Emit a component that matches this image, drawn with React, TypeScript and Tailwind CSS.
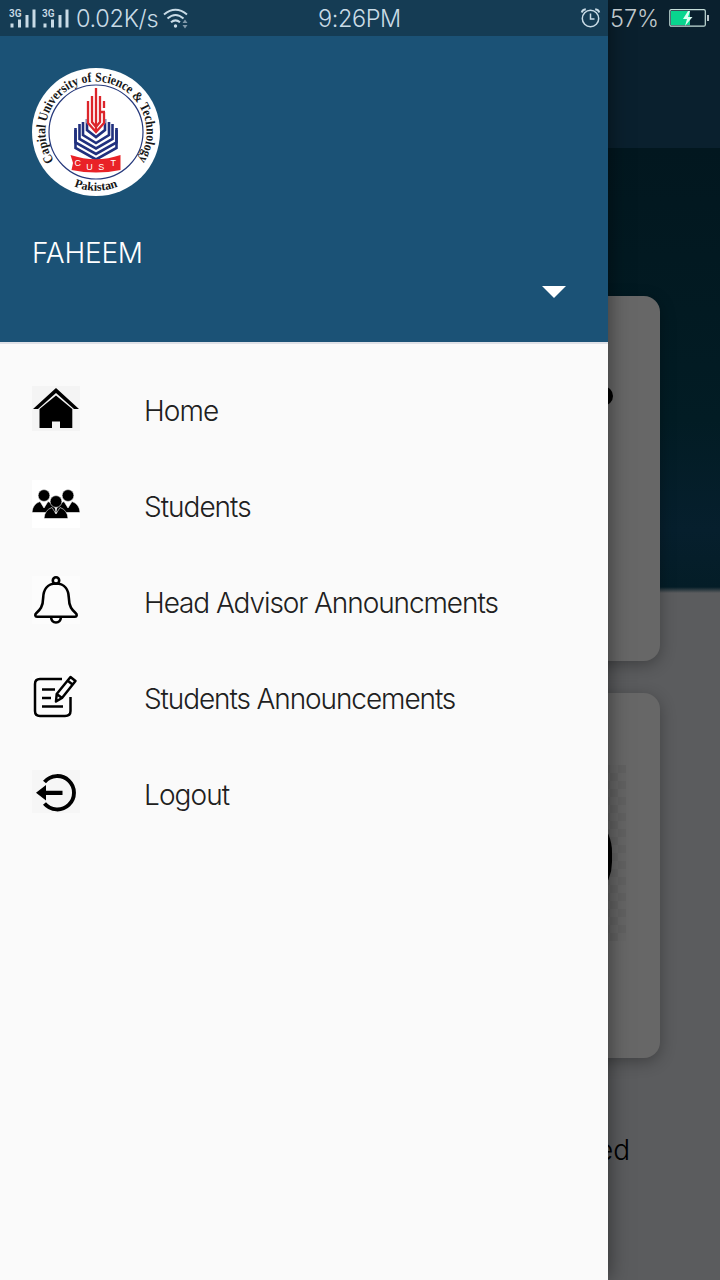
import type { ReactNode } from "react";

function Signal() {
  return (
    <svg width="29" height="24" viewBox="0 0 29 24" fill="#c9dbe6">
      <text x="0" y="11" fontSize="10" fontWeight="600" fontFamily="Roboto, sans-serif">3G</text>
      <rect x="1.5" y="17.500" width="3" height="4" />
      <rect x="9" y="13.500" width="3" height="8" />
      <rect x="16.5" y="9" width="3" height="12.500" />
      <rect x="23.5" y="3.500" width="3" height="18" />
    </svg>
  );
}

function StatusBar() {
  return (
    <header className="absolute inset-x-0 top-0 flex h-9 items-center text-[23.5px] font-light text-[#c9dbe6]">
      <div className="flex w-[318px] items-center pl-[9px]">
        <div className="flex w-[67px] gap-[4px]">
          <Signal />
          <Signal />
        </div>
        <span className="w-[86px] whitespace-nowrap pt-[2px] tracking-[-0.3px]">0.02K/s</span>
        <svg width="28" height="24" viewBox="0 0 28 24" fill="none" stroke="#c9dbe6" strokeWidth="2">
          <path d="M2 8.5Q13.5-1 25 8.5M5.5 12.5Q13.500 5.500 21.500 12.500M9 16.300Q13.500 12.500 18 16.300" />
          <circle cx="13.500" cy="20" r="1.700" fill="#c9dbe6" stroke="none" />
          <path d="m20.500 17 2.500-3.500 2.500 3.500zM20.500 19l2.500 3.500 2.500-3.500z" fill="#8299a9" stroke="none" />
        </svg>
      </div>
      <span className="w-[262px] pt-[2px] tracking-[-0.4px]">9:26PM</span>
      <svg className="shrink-0" width="22" height="22" viewBox="0 0 22 22" fill="none" stroke="#c9dbe6" strokeWidth="1.500">
        <circle cx="10.500" cy="11.500" r="8.200" />
        <path d="M10.500 6.500v5.500h4" />
        <path d="M1.800 5.500q.5-2.800 4-3.200M19.200 5.500q-.5-2.800-4-3.200" strokeWidth="2" />
      </svg>
      <span className="ml-[8px] w-[59px] pt-[2px] text-[#c0c8cc]">57%</span>
      <svg className="shrink-0" width="40" height="20" viewBox="0 0 40 20">
        <rect x=".8" y="1.600" width="35.500" height="16.600" rx="1.500" fill="none" stroke="#c5ded9" strokeWidth="1.200" />
        <rect x="2" y="3" width="19" height="14" fill="#08d58e" />
        <rect x="38" y="7" width="2" height="6" fill="#b9c4c8" />
        <path d="m19 3-5 8h4l-2 7 7.500-9h-4.500l2-6z" fill="#dcfff2" />
      </svg>
    </header>
  );
}

function Crest() {
  return (
    <svg className="size-32" viewBox="0 0 128 128">
      <defs>
        <path id="upper-arc" d="M22 92.500A50.600 50.600 0 1 1 106 92.500" />
        <path id="lower-arc" d="M25 108A59 59 0 0 0 103 108" />
      </defs>
      <circle cx="64" cy="64" r="64" fill="#fff" />
      <circle cx="64" cy="64" r="47" fill="none" stroke="#26397c" strokeWidth="1.200" />
      <g fontFamily="Liberation Serif, serif" fontWeight="700" fill="#171717">
        <text fontSize="13.500" textLength="218" lengthAdjust="spacingAndGlyphs">
          <textPath href="#upper-arc" textLength="218" lengthAdjust="spacingAndGlyphs">Capital University of Science &amp; Technology</textPath>
        </text>
        <text fontSize="12" textAnchor="middle">
          <textPath href="#lower-arc" startOffset="50%">Pakistan</textPath>
        </text>
      </g>
      <g fill="none" stroke="#20307e" strokeWidth="2.600">
        <path d="M43.500 60V80L64 91.500 84.500 80V60" />
        <path d="M43.500 62V74.500L64 86 84.500 74.500V62" />
        <path d="M47.500 56V71L64 80.500 80.500 71V56" />
        <path d="M51 54V67L64 75 77 67V54" />
        <path d="M55 51V62L64 69 73 62V51" />
      </g>
      <path d="M54.500 35 64 20l9.500 15v20L64 65l-9.500-10z" fill="#fff" />
      <g fill="none" stroke="#dc252b" strokeWidth="2.300">
        <path d="M64 20V64M60 28V54l4 5 4-5V28M56 33V55l8 9 8-9V44M72 33V40M68 44h5" />
      </g>
      <path d="M38.500 87Q64 95.500 88.500 87V102Q64 107 39.500 102L41 95z" fill="#e92227" />
      <text x="42.500 54.300 66.300 78.600" y="97.500 101.500 101.500 97.500" fill="#fff" fontFamily="Liberation Sans, sans-serif" fontSize="9">
        CUST
      </text>
    </svg>
  );
}

function HomeIcon() {
  return (
    <svg className="size-12" viewBox="0 0 48 48">
      <path fill="#f4f4f4" d="M0 2h48v45H0z" />
      <path d="M24 4 1 25h5L24 9l18 16h5z" />
      <path d="m24 11.500 16.300 13.500v19H28v-6.500h-8v6.500H7.500V25z" />
    </svg>
  );
}

function Person({ x, y }: { x: number; y: number }) {
  return (
    <g transform={`translate(${x} ${y})`} stroke="#fff" strokeWidth=".6">
      <path d="M-12 17Q-11.500 8.500-4 6L0 12.500 4 6Q11.500 8.500 12 17z" />
      <circle r="5.900" />
    </g>
  );
}

function StudentsIcon() {
  return (
    <svg className="size-12" viewBox="0 0 48 48">
      <path fill="#fff" d="M0 0h48v48H0z" />
      <Person x={12} y={15.500} />
      <Person x={36} y={15.500} />
      <Person x={24} y={21.500} />
    </svg>
  );
}

function BellIcon() {
  return (
    <svg className="size-12" viewBox="0 0 48 48" fill="none" stroke="#000" strokeWidth="2.600">
      <path fill="#fcfcfc" stroke="none" d="M0 0h48v48H0z" />
      <circle cx="24" cy="4.500" r="3.200" />
      <path d="M24 7.500C15 7.500 11.500 14 11.200 21.500 11 31 8 34 4.200 37.300 2.800 38.500 3 40.700 5 40.700H43C45 40.700 45.200 38.500 43.800 37.300 40 34 37 31 36.800 21.500 36.500 14 33 7.500 24 7.500Z" />
      <path d="M19 41Q19.500 46.500 24 46.500T29 41" />
    </svg>
  );
}

function NoteIcon() {
  return (
    <svg className="size-12" viewBox="0 0 48 48" fill="none" stroke="#000" strokeWidth="2.500">
      <path fill="#fcfcfc" stroke="none" d="M0 0h48v48H0z" />
      <path d="M30 7H8Q3 7 3 12V39Q3 44 8 44H33Q38.500 44 38.500 39V25M10 17.500H23M10 26H19M10 34.500H31" />
      <path d="m24 29.500.700-7.500L38.500 5l5 4L30 26zM24.700 22l5.300 4M35.500 8.500l5 4" strokeLinejoin="round" />
    </svg>
  );
}

function LogoutIcon() {
  return (
    <svg className="size-12" viewBox="0 0 48 48">
      <path fill="#f6f6f6" d="M0 2h48v43H0z" />
      <path d="M12.500 14A16.700 16.700 0 1 1 12.500 35.500" fill="none" stroke="#000" strokeWidth="3.900" />
      <path d="m4 24.700 10-7.700V22.700H30.500v4.200H14v5.600z" />
    </svg>
  );
}

function MenuItem({ icon, label, spacing }: { icon: ReactNode; label: string; spacing: string }) {
  return (
    <li className="flex h-24 items-center gap-16 pl-8">
      {icon}
      <span className={`whitespace-nowrap pt-[5px] text-[28px] leading-8 ${spacing}`}>{label}</span>
    </li>
  );
}

function Drawer() {
  return (
    <aside className="absolute inset-y-0 left-0 flex w-[608px] flex-col bg-[#fafafa] shadow-[0_0_20px_rgba(0,0,0,0.5)]">
      <div className="flex h-[342px] flex-col border-t-[36px] border-[#153c54] bg-[#1b5276] px-8 pt-8">
        <Crest />
        <p className="mt-[40px] text-[28px] font-light leading-[34px] tracking-[-0.2px] text-white">FAHEEM</p>
        <svg className="ml-[510px] mt-[16px]" width="24" height="12" viewBox="0 0 24 12">
          <path d="M0 0h24L12 12z" fill="#fff" />
        </svg>
      </div>
      <ul className="flex flex-col border-t-2 border-[#dfe1e7] pt-4 font-[340] text-[#202020]">
        <MenuItem icon={<HomeIcon />} label="Home" spacing="tracking-[-0.9px]" />
        <MenuItem icon={<StudentsIcon />} label="Students" spacing="tracking-[-1px]" />
        <MenuItem icon={<BellIcon />} label="Head Advisor Announcments" spacing="tracking-[-1.08px]" />
        <MenuItem icon={<NoteIcon />} label="Students Announcements" spacing="tracking-[-1.1px]" />
        <MenuItem icon={<LogoutIcon />} label="Logout" spacing="tracking-[-0.9px]" />
      </ul>
    </aside>
  );
}

function Dashboard() {
  return (
    <main className="flex h-full flex-col bg-[linear-gradient(to_bottom,#02171f_148px,#021c24_420px,#061f2d_530px,#041d27_587px,#5b5c5e_593px)]">
      <div className="h-[148px] shrink-0 bg-[#0a202e]" />
      <div className="flex flex-col gap-[32px] pl-[380px] pr-[60px] pt-[148px]">
        <section className="flex h-[365px] justify-end rounded-[16px] bg-[#676767] pr-[47px] pt-[90px] shadow-[0_4px_16px_rgba(0,0,0,0.3)]">
          <div className="size-5 rounded-full bg-black" />
        </section>
        <section className="flex h-[365px] justify-end rounded-[16px] bg-[#676767] pr-[34px] pt-[72px] shadow-[0_4px_16px_rgba(0,0,0,0.3)]">
          <div className="flex h-[176px] w-[160px] items-center justify-end bg-[#626262] bg-[conic-gradient(#616161_25%,#656565_0_50%,#616161_0_75%,#656565_0)] bg-[size:16px_16px] pr-[14px] pt-[8px]">
            <div className="h-[100px] w-[90px] rounded-full bg-black" />
          </div>
        </section>
      </div>
      <p className="mt-[74px] pr-[90px] text-right text-[28px] font-[340] leading-9 text-black">Completed</p>
    </main>
  );
}

export default function App() {
  return (
    <div className="relative h-[1280px] w-[720px] overflow-hidden font-[Inter,sans-serif]">
      <Dashboard />
      <Drawer />
      <StatusBar />
    </div>
  );
}
